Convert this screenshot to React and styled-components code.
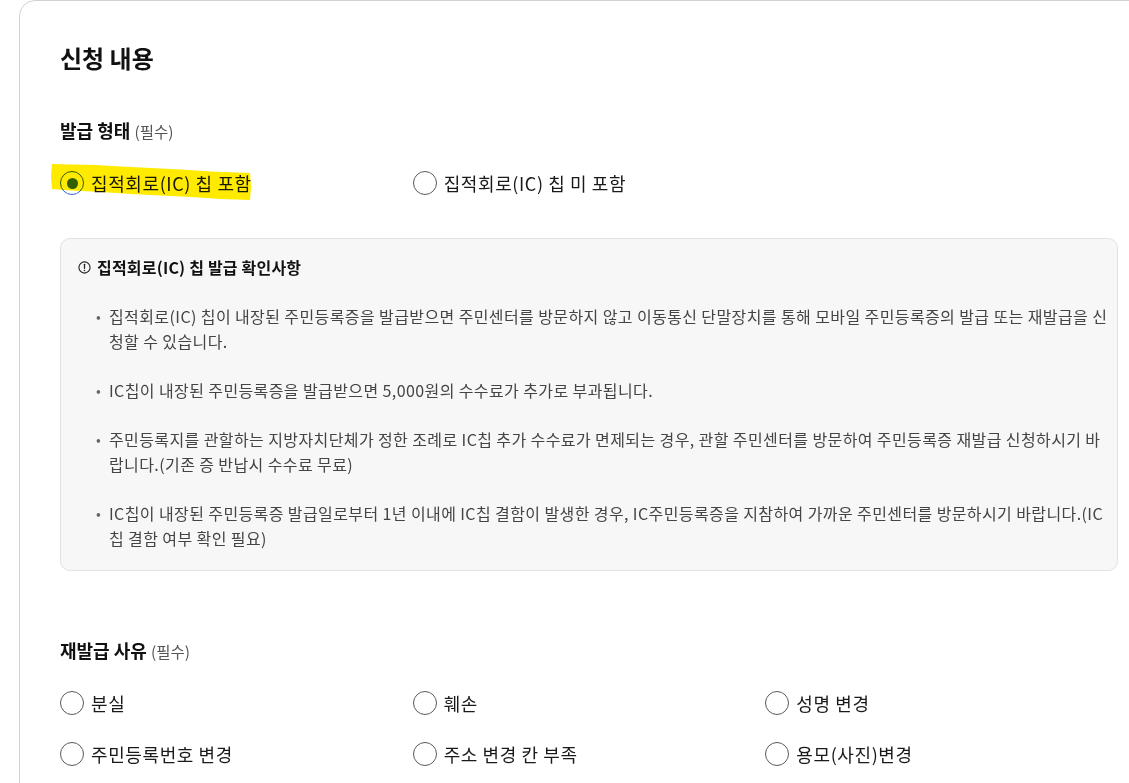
import React from 'react';
import styled, { createGlobalStyle } from 'styled-components';

const GlobalStyle = createGlobalStyle`
  html, body {
    margin: 0;
    padding: 0;
    overflow: hidden;
    background: #fff;
  }
  body {
    font-family: "Noto Sans CJK KR", "Noto Sans", sans-serif;
    color: #111;
  }
`;

const notices = [
  '집적회로(IC) 칩이 내장된 주민등록증을 발급받으면 주민센터를 방문하지 않고 이동통신 단말장치를 통해 모바일 주민등록증의 발급 또는 재발급을 신청할 수 있습니다.',
  'IC칩이 내장된 주민등록증을 발급받으면 5,000원의 수수료가 추가로 부과됩니다.',
  '주민등록지를 관할하는 지방자치단체가 정한 조례로 IC칩 추가 수수료가 면제되는 경우, 관할 주민센터를 방문하여 주민등록증 재발급 신청하시기 바랍니다.(기존 증 반납시 수수료 무료)',
  'IC칩이 내장된 주민등록증 발급일로부터 1년 이내에 IC칩 결함이 발생한 경우, IC주민등록증을 지참하여 가까운 주민센터를 방문하시기 바랍니다.(IC칩 결함 여부 확인 필요)',
];

const reasons = ['분실', '훼손', '성명 변경', '주민등록번호 변경', '주소 변경 칸 부족', '용모(사진)변경'];

function Radio({ label, checked, highlight }) {
  return (
    <Option>
      <Circle $checked={checked} />
      <OptionText>{label}</OptionText>
      {highlight && (
        <Marker viewBox="0 0 200 38" preserveAspectRatio="none">
          <path d="M1 1 L20 1.5 L45 2 L70 3.5 L100 5 L130 6.5 L160 8.5 L199 10 L200 24 L199 37 L170 36 L140 34 L110 32.5 L80 31 L50 29 L20 27.5 L1 26 L0 14 Z" fill="#ffea00" />
        </Marker>
      )}
    </Option>
  );
}

function InfoIcon() {
  return (
    <svg width="13" height="13" viewBox="0 0 14 14" fill="none">
      <circle cx="7" cy="7" r="6" stroke="#222" strokeWidth="1.2" />
      <path d="M7 3.6 V7.8" stroke="#222" strokeWidth="1.4" strokeLinecap="round" />
      <circle cx="7" cy="10.2" r="0.85" fill="#222" />
    </svg>
  );
}

export default function App() {
  return (
    <>
      <GlobalStyle />
      <Card>
        <Heading>신청 내용</Heading>

        <FieldLabel>
          발급 형태 <Required>(필수)</Required>
        </FieldLabel>
        <OptionGrid>
          <Radio label="집적회로(IC) 칩 포함" checked highlight />
          <Radio label="집적회로(IC) 칩 미 포함" />
        </OptionGrid>

        <InfoBox>
          <InfoTitle>
            <InfoIcon />
            집적회로(IC) 칩 발급 확인사항
          </InfoTitle>
          <NoticeList>
            {notices.map((text, i) => (
              <NoticeItem key={i}>
                <Bullet>•</Bullet>
                <NoticeText>{text}</NoticeText>
              </NoticeItem>
            ))}
          </NoticeList>
        </InfoBox>

        <FieldLabel $spaced>
          재발급 사유 <Required>(필수)</Required>
        </FieldLabel>
        <OptionGrid>
          {reasons.map((r) => (
            <Radio key={r} label={r} />
          ))}
        </OptionGrid>
      </Card>
    </>
  );
}

const Card = styled.div`
  box-sizing: border-box;
  width: 1140px;
  margin-left: 19px;
  padding: 40px 40px 60px 40px;
  border: 1px solid #d2d2d2;
  border-radius: 16px;
`;

const Heading = styled.h2`
  margin: 0;
  font-size: 24px;
  line-height: 34px;
  font-weight: 700;
  color: #111;
`;

const FieldLabel = styled.div`
  margin-top: ${(p) => (p.$spaced ? '67px' : '43px')};
  font-size: 18px;
  line-height: 24px;
  font-weight: 700;
  color: #111;
`;

const Required = styled.span`
  font-size: 15.5px;
  font-weight: 400;
  color: #555;
`;

const OptionGrid = styled.div`
  display: grid;
  grid-template-columns: repeat(3, 1fr);
  row-gap: 27px;
  margin-top: 28px;
`;

const Option = styled.label`
  position: relative;
  display: flex;
  align-items: center;
  gap: 7px;
  height: 24px;
`;

const Circle = styled.span`
  position: relative;
  z-index: 0;
  box-sizing: border-box;
  flex: none;
  width: 24px;
  height: 24px;
  border-radius: 50%;
  border: 1.3px solid ${(p) => (p.$checked ? '#3466d6' : '#5a5a5a')};
  display: flex;
  align-items: center;
  justify-content: center;
  &::after {
    content: '';
    display: ${(p) => (p.$checked ? 'block' : 'none')};
    width: 11px;
    height: 11px;
    border-radius: 50%;
    background: #3466d6;
  }
`;

const OptionText = styled.span`
  font-size: 18px;
  letter-spacing: 0.6px;
  color: #1a1a1a;
  white-space: nowrap;
`;

const Marker = styled.svg`
  position: absolute;
  left: -9px;
  top: -8px;
  width: 200px;
  height: 38px;
  mix-blend-mode: multiply;
  pointer-events: none;
`;

const InfoBox = styled.div`
  margin-top: 43px;
  padding: 17px 4px 19px 17px;
  background: #f7f7f7;
  border: 1px solid #e2e2e2;
  border-radius: 10px;
`;

const InfoTitle = styled.div`
  display: flex;
  align-items: center;
  gap: 6px;
  font-size: 16px;
  letter-spacing: 0.2px;
  line-height: 22px;
  font-weight: 700;
  color: #111;
`;

const NoticeList = styled.ul`
  list-style: none;
  margin: 26px 0 0 0;
  padding: 0;
  display: flex;
  flex-direction: column;
  gap: 24px;
`;

const NoticeItem = styled.li`
  display: flex;
  padding-left: 18px;
  font-size: 16px;
  letter-spacing: 0.4px;
  line-height: 25px;
  color: #444;
`;

const Bullet = styled.span`
  flex: none;
  width: 13px;
  font-size: 14px;
  color: #666;
`;

const NoticeText = styled.span`
  word-break: break-all;
`;
